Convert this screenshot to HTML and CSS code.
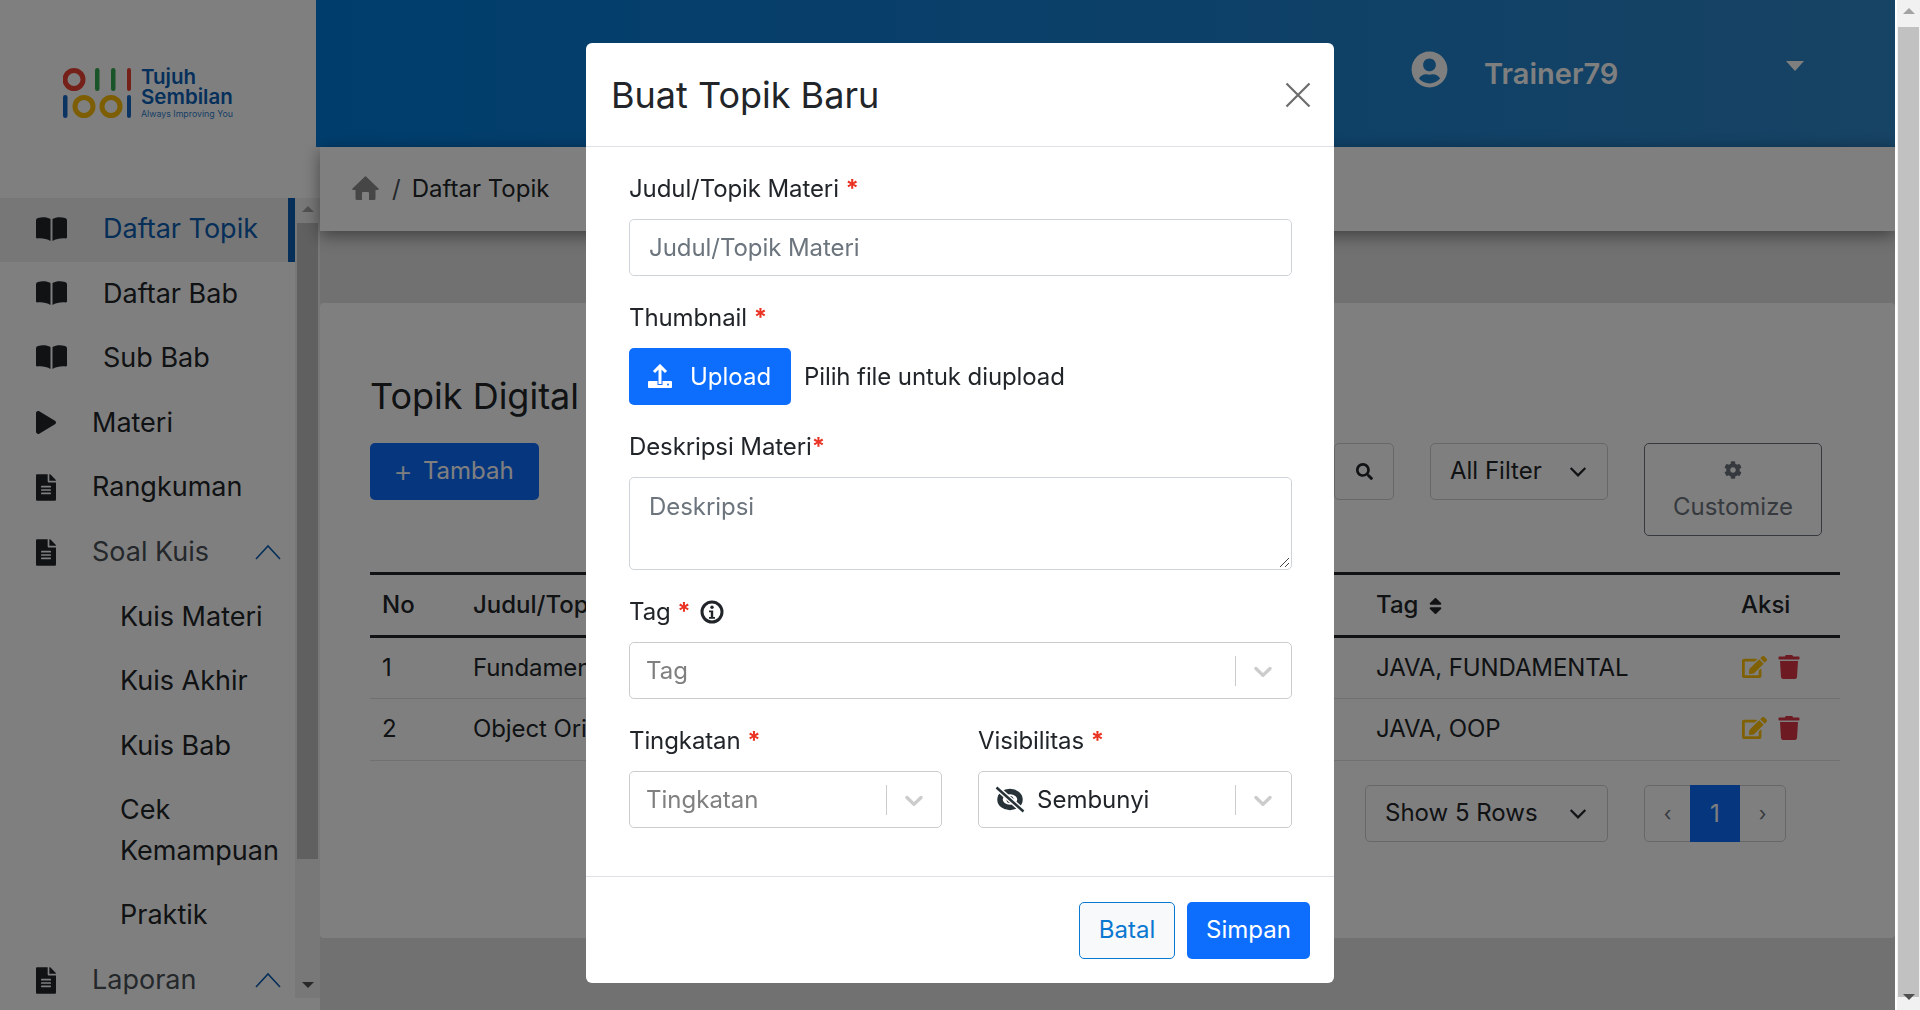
FILE: index.html
```html
<!DOCTYPE html>
<html lang="id">
<head>
<meta charset="utf-8">
<title>Daftar Topik</title>
<link rel="stylesheet" href="styles.css">
</head>
<body>
<svg class="defs" width="0" height="0" aria-hidden="true">
  <symbol id="i-book" viewBox="0 0 31 23" preserveAspectRatio="none"><path d="M0 3Q0 1.500 2 1C6 0 11 0 14.500 2V23C11 20.500 5 20 1 20.500Q0 20.500 0 19.500Z"/><path d="M31 3Q31 1.500 29 1C25 0 20 0 16.500 2V23C20 20.500 26 20 30 20.500Q31 20.500 31 19.500Z"/></symbol>
  <symbol id="i-file" viewBox="0 0 384 512"><path d="M224 136V0H24C10.7 0 0 10.7 0 24v464c0 13.3 10.7 24 24 24h336c13.3 0 24-10.7 24-24V160H248c-13.2 0-24-10.8-24-24zm64 236c0 6.6-5.4 12-12 12H108c-6.6 0-12-5.4-12-12v-8c0-6.6 5.4-12 12-12h168c6.6 0 12 5.4 12 12v8zm0-64c0 6.6-5.4 12-12 12H108c-6.6 0-12-5.4-12-12v-8c0-6.6 5.4-12 12-12h168c6.6 0 12 5.4 12 12v8zm0-72v8c0 6.6-5.4 12-12 12H108c-6.6 0-12-5.4-12-12v-8c0-6.6 5.4-12 12-12h168c6.6 0 12 5.4 12 12zm96-114.1v6.1H256V0h6.1c6.4 0 12.5 2.5 17 7l97.9 98c4.5 4.5 7 10.6 7 16.9z"/></symbol>
  <symbol id="i-play" viewBox="0 0 448 512"><path d="M424.4 214.7L72.4 6.6C43.8-10.3 0 6.1 0 47.9V464c0 37.5 40.7 60.1 72.4 41.3l352-208c31.4-18.5 31.5-64.1 0-82.6z"/></symbol>
  <symbol id="i-edit" viewBox="0 0 576 512"><path d="M402.6 83.2l90.2 90.2c3.8 3.8 3.8 10 0 13.8L274.4 405.6l-92.8 10.3c-12.4 1.4-22.9-9.1-21.5-21.5l10.3-92.8L388.8 83.2c3.8-3.8 10-3.8 13.8 0zm162-22.9l-48.8-48.8c-15.2-15.2-39.9-15.2-55.2 0l-35.4 35.4c-3.8 3.8-3.8 10 0 13.8l90.2 90.2c3.8 3.8 10 3.8 13.8 0l35.4-35.4c15.2-15.3 15.2-40 0-55.2zM384 346.2V448H64V128h229.8c3.2 0 6.2-1.3 8.5-3.5l40-40c7.6-7.6 2.2-20.5-8.5-20.5H48C21.5 64 0 85.5 0 112v352c0 26.5 21.5 48 48 48h352c26.5 0 48-21.5 48-48V306.2c0-10.7-12.9-16-20.5-8.5l-40 40c-2.2 2.3-3.5 5.3-3.5 8.5z"/></symbol>
  <symbol id="i-trash" viewBox="0 0 448 512"><path d="M432 32H312l-9.4-18.7A24 24 0 0 0 281.1 0H166.8a23.72 23.72 0 0 0-21.4 13.3L136 32H16A16 16 0 0 0 0 48v32a16 16 0 0 0 16 16h416a16 16 0 0 0 16-16V48a16 16 0 0 0-16-16zM53.2 467a48 48 0 0 0 47.9 45h245.8a48 48 0 0 0 47.9-45L416 128H32z"/></symbol>
  <symbol id="i-chev-up" viewBox="0 0 26 16"><path d="M1 15 13 2l12 13" fill="none" stroke="currentColor" stroke-width="1.6"/></symbol>
  <symbol id="i-chev-down" viewBox="0 0 16 16"><path d="M1.500 4.500 8 11l6.500-6.500" fill="none" stroke="currentColor" stroke-width="2"/></symbol>
  <symbol id="i-select" viewBox="0 0 20 20"><path d="M4.516 7.548c.436-.446 1.043-.481 1.576 0L10 11.295l3.908-3.747c.533-.481 1.141-.446 1.574 0 .436.445.408 1.197 0 1.615-.406.418-4.695 4.502-4.695 4.502a1.095 1.095 0 0 1-1.576 0S4.924 9.581 4.516 9.163c-.409-.418-.436-1.17 0-1.615z"/></symbol>
</svg>

<div class="page">
  <aside class="sidebar">
    <div class="logo">
      <svg class="logo-mark" viewBox="0 0 68 50" aria-hidden="true">
        <circle cx="11" cy="11.500" r="9" fill="none" stroke="#ea4335" stroke-width="5"/>
        <rect x="32" y="0" width="4.500" height="23" rx="2.200" fill="#34a853"/>
        <rect x="48" y="0" width="4.500" height="23" rx="2.200" fill="#34a853"/>
        <rect x="64" y="0" width="4" height="23" rx="2" fill="#ea4335"/>
        <rect x="0" y="27" width="4.500" height="23" rx="2.200" fill="#1668c7"/>
        <circle cx="21" cy="38.500" r="9" fill="none" stroke="#fbbc05" stroke-width="5"/>
        <circle cx="48" cy="38.500" r="9" fill="none" stroke="#fbbc05" stroke-width="5"/>
        <rect x="64" y="27" width="4" height="23" rx="2" fill="#1668c7"/>
      </svg>
      <div class="logo-text">
        <span class="logo-name">Tujuh</span>
        <span class="logo-name">Sembilan</span>
        <span class="logo-tag">Always Improving You</span>
      </div>
    </div>
    <div class="side-scroll">
      <nav class="menu">
        <a class="item active"><svg class="ic-book"><use href="#i-book"/></svg><span class="lbl-book">Daftar Topik</span></a>
        <a class="item"><svg class="ic-book"><use href="#i-book"/></svg><span class="lbl-book">Daftar Bab</span></a>
        <a class="item"><svg class="ic-book"><use href="#i-book"/></svg><span class="lbl-book">Sub Bab</span></a>
        <a class="item"><svg class="ic-file"><use href="#i-play"/></svg><span class="lbl-file">Materi</span></a>
        <a class="item"><svg class="ic-file"><use href="#i-file"/></svg><span class="lbl-file">Rangkuman</span></a>
        <a class="item parent"><svg class="ic-file"><use href="#i-file"/></svg><span class="lbl-file">Soal Kuis</span><svg class="chev"><use href="#i-chev-up"/></svg></a>
        <a class="item sub">Kuis Materi</a>
        <a class="item sub">Kuis Akhir</a>
        <a class="item sub">Kuis Bab</a>
        <a class="item sub multi">Cek Kemampuan</a>
        <a class="item sub">Praktik</a>
        <a class="item parent"><svg class="ic-file"><use href="#i-file"/></svg><span class="lbl-file">Laporan</span><svg class="chev"><use href="#i-chev-up"/></svg></a>
      </nav>
      <div class="side-bar">
        <span class="arrow-up"></span>
        <span class="thumb"></span>
        <span class="arrow-down"></span>
      </div>
    </div>
  </aside>

  <div class="content">
    <header class="topbar">
      <div class="user">
        <svg class="avatar" viewBox="0 0 496 512"><path d="M248 8C111 8 0 119 0 256s111 248 248 248 248-111 248-248S385 8 248 8zm0 96c48.6 0 88 39.4 88 88s-39.400 88-88 88-88-39.400-88-88 39.400-88 88-88zm0 344c-58.700 0-111.300-26.600-146.500-68.200 18.800-35.400 55.600-59.800 98.500-59.800 2.400 0 4.800.4 7.100 1.100 13 4.200 26.600 6.900 40.900 6.900 14.300 0 28-2.700 40.900-6.900 2.300-.7 4.700-1.100 7.100-1.100 42.900 0 79.700 24.400 98.500 59.800C359.300 421.400 306.700 448 248 448z"/></svg>
        <span class="user-name">Trainer79</span>
        <span class="user-caret"></span>
      </div>
    </header>
    <div class="crumbs">
      <svg class="home" viewBox="0 0 27 24"><path d="M13.500 0 .5 12.500a.8.8 0 0 0 .6 1.400H3.500V22.500a1.500 1.500 0 0 0 1.500 1.500H10V17a1 1 0 0 1 1-1h5a1 1 0 0 1 1 1v7h5a1.500 1.500 0 0 0 1.500-1.500V13.900h2.400a.8.8 0 0 0 .6-1.400z"/></svg>
      <span class="crumb-sep">/</span>
      <span class="crumb-text">Daftar Topik</span>
    </div>
    <main class="card">
      <h1 class="heading">Topik Digital</h1>
      <div class="toolbar">
        <button class="btn-add"><span class="plus">+</span>Tambah</button>
        <div class="tools">
          <button class="btn-search"><svg viewBox="0 0 512 512"><path d="M505 442.700L405.300 343c-4.500-4.500-10.600-7-17-7H372c27.600-35.300 44-79.700 44-128C416 93.100 322.900 0 208 0S0 93.100 0 208s93.100 208 208 208c48.300 0 92.700-16.400 128-44v16.300c0 6.400 2.500 12.500 7 17l99.700 99.700c9.400 9.400 24.600 9.400 33.900 0l28.300-28.300c9.400-9.400 9.400-24.600.1-34zM208 336c-70.700 0-128-57.200-128-128 0-70.700 57.200-128 128-128 70.700 0 128 57.200 128 128 0 70.700-57.200 128-128 128z"/></svg></button>
          <div class="select-box filter"><span>All Filter</span><svg class="sel-chev"><use href="#i-chev-down"/></svg></div>
          <button class="btn-custom">
            <svg viewBox="0 0 512 512"><path d="M487.400 315.700l-42.600-24.600c4.300-23.200 4.300-47 0-70.200l42.600-24.600c4.900-2.800 7.100-8.600 5.500-14-11.100-35.600-30-67.800-54.700-94.600-3.800-4.100-10-5.100-14.800-2.300L380.800 110c-17.900-15.400-38.500-27.300-60.800-35.100V25.800c0-5.600-3.900-10.500-9.400-11.700-36.700-8.200-74.300-7.800-109.200 0-5.500 1.200-9.400 6.100-9.400 11.700V75c-22.200 7.900-42.800 19.800-60.800 35.100L88.700 85.500c-4.900-2.800-11-1.900-14.800 2.300-24.700 26.700-43.600 58.900-54.700 94.600-1.700 5.400.6 11.200 5.500 14L67.300 221c-4.300 23.200-4.300 47 0 70.200l-42.600 24.600c-4.900 2.800-7.100 8.600-5.500 14 11.100 35.600 30 67.800 54.700 94.600 3.800 4.100 10 5.100 14.800 2.300l42.600-24.600c17.900 15.400 38.500 27.300 60.800 35.100v49.200c0 5.600 3.900 10.500 9.400 11.700 36.700 8.200 74.300 7.800 109.200 0 5.500-1.200 9.400-6.100 9.400-11.700v-49.200c22.200-7.900 42.800-19.800 60.800-35.100l42.600 24.600c4.900 2.800 11 1.900 14.800-2.300 24.700-26.700 43.600-58.900 54.700-94.600 1.500-5.500-.7-11.300-5.600-14.100zM256 336c-44.100 0-80-35.900-80-80s35.900-80 80-80 80 35.900 80 80-35.900 80-80 80z"/></svg>
            <span>Customize</span>
          </button>
        </div>
      </div>
      <table class="table">
        <thead>
          <tr><th class="c-no">No</th><th class="c-title">Judul/Topik</th><th class="c-tag">Tag <svg class="sort" viewBox="0 0 320 512"><path d="M41 288h238c21.400 0 32.100 25.900 17 41L177 448c-9.400 9.400-24.600 9.400-33.900 0L24 329c-15.100-15.100-4.400-41 17-41zm255-105L177 64c-9.400-9.400-24.600-9.400-33.900 0L24 183c-15.100 15.100-4.400 41 17 41h238c21.400 0 32.100-25.900 17-41z"/></svg></th><th class="c-act">Aksi</th></tr>
        </thead>
        <tbody>
          <tr><td class="c-no">1</td><td class="c-title">Fundamental</td><td class="c-tag">JAVA, FUNDAMENTAL</td><td class="c-act"><svg class="ic-edit"><use href="#i-edit"/></svg><svg class="ic-trash"><use href="#i-trash"/></svg></td></tr>
          <tr><td class="c-no">2</td><td class="c-title">Object Ori</td><td class="c-tag">JAVA, OOP</td><td class="c-act"><svg class="ic-edit"><use href="#i-edit"/></svg><svg class="ic-trash"><use href="#i-trash"/></svg></td></tr>
        </tbody>
      </table>
      <div class="pager-row">
        <div class="select-box rows"><span>Show 5 Rows</span><svg class="sel-chev"><use href="#i-chev-down"/></svg></div>
        <div class="pager"><span class="pg">‹</span><span class="pg current">1</span><span class="pg">›</span></div>
      </div>
    </main>
  </div>

  <div class="page-bar">
    <span class="arrow-up"></span>
    <span class="thumb"></span>
    <span class="arrow-down"></span>
  </div>
</div>

<div class="backdrop"></div>

<section class="modal">
  <header class="modal-head">
    <h2 class="modal-title">Buat Topik Baru</h2>
    <svg class="close" viewBox="0 0 26 26"><path d="M1.500 1.500l23 23M24.500 1.500l-23 23" fill="none" stroke="#6c6c6c" stroke-width="2.200"/></svg>
  </header>
  <div class="modal-body">
    <div class="field">
      <label class="label">Judul/Topik Materi <span class="req">*</span></label>
      <div class="input placeholder">Judul/Topik Materi</div>
    </div>
    <div class="field">
      <label class="label">Thumbnail <span class="req">*</span></label>
      <div class="upload-row">
        <button class="btn-upload">
          <svg viewBox="0 0 24 24"><rect x="0" y="17" width="24" height="7" rx="1" fill="#fff"/><rect x="9.500" y="16" width="5" height="5" fill="#0d6efd"/><path d="M12 20V2M6 8l6-6 6 6" fill="none" stroke="#fff" stroke-width="3"/><circle cx="20" cy="20.500" r="1" fill="#0d6efd"/></svg>
          Upload
        </button>
        <span class="upload-hint">Pilih file untuk diupload</span>
      </div>
    </div>
    <div class="field">
      <label class="label">Deskripsi Materi<span class="req">*</span></label>
      <div class="input textarea placeholder">Deskripsi<svg class="grip" viewBox="0 0 12 12"><path d="M11 2 2 11M11 7l-4 4" fill="none" stroke="#444" stroke-width="1"/></svg></div>
    </div>
    <div class="field">
      <label class="label">Tag <span class="req">*</span> <svg class="info" viewBox="0 0 24 24"><circle cx="12" cy="12" r="10" fill="none" stroke="#212529" stroke-width="3"/><circle cx="12" cy="7.300" r="1.700" fill="#212529"/><path d="M9 10.500h4.200V17H15v1.800H9V17h1.800v-4.700H9z" fill="#212529"/></svg></label>
      <div class="rselect"><span class="rs-value muted">Tag</span><span class="rs-sep"></span><svg class="rs-chev"><use href="#i-select"/></svg></div>
    </div>
    <div class="field-row">
      <div class="field narrow">
        <label class="label">Tingkatan <span class="req">*</span></label>
        <div class="rselect"><span class="rs-value muted">Tingkatan</span><span class="rs-sep"></span><svg class="rs-chev"><use href="#i-select"/></svg></div>
      </div>
      <div class="field wide">
        <label class="label">Visibilitas <span class="req">*</span></label>
        <div class="rselect"><svg class="eye" viewBox="0 0 30 27"><ellipse cx="15" cy="13.500" rx="10" ry="8" fill="none" stroke="#263238" stroke-width="5.500"/><circle cx="15" cy="13.500" r="3.500" fill="#263238"/><path d="M1.500 1.500 28.500 25.500" stroke="#fff" stroke-width="5.500"/><path d="M1.500 1.500 28.500 25.500" stroke="#263238" stroke-width="2.500"/></svg><span class="rs-value">Sembunyi</span><span class="rs-sep"></span><svg class="rs-chev"><use href="#i-select"/></svg></div>
      </div>
    </div>
  </div>
  <footer class="modal-foot">
    <button class="btn-cancel">Batal</button>
    <button class="btn-save">Simpan</button>
  </footer>
</section>
</body>
</html>
```

FILE: styles.css
```css
* { box-sizing: border-box; }
html, body { margin: 0; height: 100%; overflow: hidden; }
body {
  font-family: Inter, "Liberation Sans", sans-serif;
  font-size: 24px;
  line-height: 1.5;
  color: #212529;
  background: #fff;
}
.defs { position: absolute; }
button { font: inherit; cursor: pointer; }

.page { display: flex; height: 1010px; background: #e2e2e2; }

/* sidebar */
.sidebar { width: 320px; flex: none; background: #fff; display: flex; flex-direction: column; height: 1010px; }
.logo { height: 198px; padding: 68px 0 0 63px; display: flex; gap: 10px; }
.logo-mark { width: 68px; height: 50px; flex: none; }
.logo-text { display: flex; flex-direction: column; margin-top: -1px; color: #0a60b8; }
.logo-name { font-size: 20.500px; line-height: 20px; font-weight: 600; }
.logo-tag { font-size: 8.800px; line-height: 14px; color: #2f7ecb; }
.side-scroll { display: flex; height: 800px; position: relative; }
.menu { flex: 1; display: flex; flex-direction: column; overflow: hidden; min-width: 0; }
.item { display: flex; align-items: center; height: 64.600px; flex: none; padding: 0 0 1px 36px; color: #212529; font-size: 27px; line-height: 40.400px; position: relative; }
.item.active { background: #eeeeee; color: #0a5cb0; height: 64px; }
.item.active::after { content: ""; position: absolute; right: 0; top: 0; bottom: 0; width: 7px; background: #0a5cb0; }
.ic-book { width: 31px; height: 24px; flex: none; fill: #212529; margin-bottom: 2px; }
.ic-file { width: 20px; height: 27px; flex: none; fill: #212529; }
.lbl-book { margin-left: 36px; }
.lbl-file { margin-left: 36px; }
.parent { color: #495057; }
.chev { position: absolute; left: 255px; top: 24px; width: 26px; height: 16px; color: #0a5cb0; }
.sub { padding-left: 120px; }
.multi { height: 105px; padding-right: 20px; }
.side-bar { width: 25px; flex: none; background: #f1f1f1; display: flex; flex-direction: column; align-items: center; position: relative; }
.thumb { display: block; background: #c1c1c1; }
.side-bar .thumb { width: 21px; height: 636px; margin-top: 25px; }
.arrow-up, .arrow-down { position: absolute; width: 0; height: 0; border-left: 6px solid transparent; border-right: 6px solid transparent; }
.arrow-up { top: 8px; border-bottom: 6px solid #a3a3a3; }
.arrow-down { bottom: 10px; border-top: 6px solid #505050; }

/* main */
.content { flex: 1; min-width: 0; display: flex; flex-direction: column; position: relative; }
.topbar { height: 147px; margin-left: -4px; background: linear-gradient(90deg, #007bdb 0%, #2f86c8 100%); display: flex; justify-content: flex-end; flex: none; }
.user { display: flex; align-items: flex-start; padding-top: 51px; width: 484px; color: #fff; }
.avatar { width: 37px; height: 37px; fill: #fff; flex: none; }
.user-name { margin: 1px 0 0 36px; font-size: 29px; line-height: 44px; font-weight: 600; }
.user-caret { margin: 10px 0 0 168px; width: 0; height: 0; border-left: 9px solid transparent; border-right: 9px solid transparent; border-top: 10px solid #fff; }
.crumbs { height: 84px; flex: none; background: #fff; display: flex; align-items: center; padding-left: 32px; box-shadow: 0 4px 16px rgba(0,0,0,.45); position: relative; font-size: 24px; }
.home { width: 27px; height: 24px; fill: #8c8c8c; margin-bottom: 2px; }
.crumb-sep { margin: 0 12px 0 13px; color: #495057; }
.crumb-text { margin-left: -1px; }
.card { margin-top: 72px; height: 635px; background: #fff; border-radius: 4px; padding: 0 55px 0 50px; display: flex; flex-direction: column; }
.heading { margin: 66px 0 0; font-size: 36px; line-height: 54px; font-weight: 400; }
.toolbar { margin-top: 20px; display: flex; justify-content: space-between; align-items: flex-start; height: 129px; padding-right: 18px; }
.btn-add { width: 169px; height: 57px; border: 0; border-radius: 5px; background: #0d6efd; color: #fff; padding: 0 2px 2px 0; display: flex; align-items: center; justify-content: center; }
.plus { margin-right: 10px; font-size: 30px; line-height: 1; font-weight: 300; }
.tools { display: flex; align-items: flex-start; gap: 36px; }
.btn-search { width: 60px; height: 57px; background: transparent; border: 1px solid #cfcfcf; border-radius: 5px; padding: 0; display: flex; align-items: center; justify-content: center; }
.btn-search svg { width: 17px; height: 17px; fill: #212529; }
.select-box { height: 57px; border: 1px solid #cfcfcf; border-radius: 5px; display: flex; align-items: center; justify-content: space-between; padding: 0 20px 2px 19px; }
.filter { width: 178px; }
.sel-chev { width: 18px; height: 18px; color: #212529; margin-top: 2px; }
.btn-custom { width: 178px; height: 93px; background: transparent; border: 1px solid #6c757d; border-radius: 5px; color: #6c757d; padding: 17px 0 0; display: flex; flex-direction: column; align-items: center; justify-content: flex-start; }
.btn-custom svg { width: 18px; height: 18px; fill: #6c757d; margin-bottom: 10px; }

.table { width: 100%; border-collapse: collapse; table-layout: fixed; }
.table th { height: 63px; padding: 0 0 1px; text-align: left; font-weight: 500; border-top: 3px solid #212529; border-bottom: 3px solid #212529; }
.table td { height: 62px; padding: 0; border-bottom: 1px solid #dee2e6; letter-spacing: -.1px; }
.table tr + tr td { padding-bottom: 2px; }
.c-no { width: 103px; padding-left: 12px !important; }
.c-title { width: 903px; }
.c-tag { width: 365px; }
.sort { width: 13px; height: 22px; fill: #212529; margin-left: 4px; vertical-align: -4px; }
.ic-edit { width: 25px; height: 24px; fill: #ffc107; vertical-align: middle; margin: 0 0 4px 1px; }
.ic-trash { width: 22px; height: 24px; fill: #dc3545; margin: 0 0 4px 11px; vertical-align: middle; }

.pager-row { margin-top: 24px; display: flex; justify-content: flex-end; gap: 36px; padding-right: 54px; }
.rows { width: 243px; }
.pager { width: 142px; height: 57px; border: 1px solid #cfcfcf; border-radius: 5px; display: flex; }
.pg { flex: 1; display: flex; align-items: center; justify-content: center; color: #6c757d; font-size: 20px; }
.pg.current { flex: none; width: 50px; margin: -1px 0; background: #0d6efd; color: #fff; font-size: 24px; }

.page-bar { width: 25px; flex: none; background: #f1f1f1; position: relative; display: flex; flex-direction: column; align-items: center; border-left: 2px solid #fff; }
.page-bar .thumb { width: 21px; height: 970px; margin-top: 27px; }
.page-bar .arrow-up { border-bottom-color: #a3a3a3; }

/* modal */
.backdrop { position: fixed; left: 0; top: 0; width: 1895px; height: 1010px; background: rgba(0,0,0,.5); }
.modal { position: fixed; left: 586px; top: 43px; width: 748px; height: 940px; background: #fff; border-radius: 6px; display: flex; flex-direction: column; }
.modal-head { height: 104px; flex: none; border-bottom: 1px solid #dee2e6; display: flex; align-items: center; justify-content: space-between; padding: 0 23px 0 25px; }
.modal-title { margin: 0; font-size: 36px; line-height: 1.5; font-weight: 400; }
.close { width: 26px; height: 26px; }
.modal-body { flex: 1; padding: 23px 42px 0 43px; display: flex; flex-direction: column; }
.field { margin-bottom: 23px; }
.label { display: block; height: 49px; padding-top: 1px; letter-spacing: -.1px; }
.req { color: #ea3323; font-weight: 700; }
.input { height: 57px; border: 1px solid #ced4da; border-radius: 5px; padding: 0 19px; display: flex; align-items: center; letter-spacing: -.06px; }
.placeholder { color: #6c757d; }
.textarea { height: 93px; align-items: flex-start; padding-top: 11px; position: relative; }
.grip { position: absolute; right: 1px; bottom: 1px; width: 12px; height: 12px; }
.upload-row { display: flex; align-items: center; gap: 13px; }
.upload-hint { letter-spacing: -.1px; }
.btn-upload { width: 162px; height: 57px; background: #0d6efd; border: 0; border-radius: 5px; color: #fff; display: flex; align-items: center; gap: 18px; padding: 0 0 0 19px; }
.btn-upload svg { width: 24px; height: 24px; flex: none; margin-bottom: 2px; }
.info { width: 24px; height: 24px; vertical-align: -4px; margin-left: 3px; }
.rselect { height: 57px; border: 1px solid #cccccc; border-radius: 5px; display: flex; align-items: center; padding-left: 16px; }
.rs-value { flex: 1; min-width: 0; }
.muted { color: #808080; }
.rs-sep { width: 1px; height: 30px; background: #cccccc; }
.rs-chev { width: 30px; height: 30px; margin: 0 13px 0 12px; fill: #cccccc; flex: none; }
.narrow .rs-chev { margin-right: 12px; }
.eye { width: 30px; height: 27px; margin-right: 12px; flex: none; }
.field-row { display: flex; gap: 36px; }
.narrow { width: 313px; flex: none; }
.wide { flex: 1; min-width: 0; }
.modal-foot { height: 107px; flex: none; border-top: 1px solid #dee2e6; display: flex; justify-content: flex-end; align-items: flex-start; gap: 12px; padding: 25px 24px 0 0; }
.btn-cancel { width: 96px; height: 57px; background: #f8f9fa; color: #0a78d0; border: 1px solid #0a78d0; border-radius: 5px; padding: 0 0 2px; }
.btn-save { width: 123px; height: 57px; background: #0d6efd; color: #fff; border: 0; border-radius: 5px; padding: 0 0 2px; }
```
